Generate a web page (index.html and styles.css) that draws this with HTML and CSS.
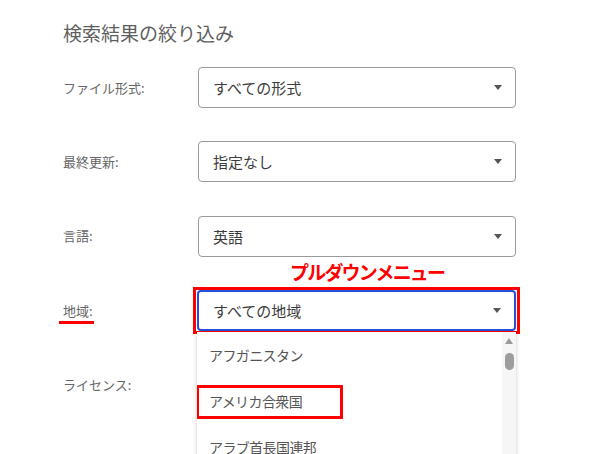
FILE: index.html
```html
<!DOCTYPE html>
<html lang="ja">
<head>
    <meta charset="UTF-8">
    <meta name="viewport" content="width=device-width, initial-scale=1.0">
    <title>検索結果の絞り込み</title>
    <link rel="stylesheet" href="styles.css">
</head>
<body>
    <div class="panel">
        <h2 class="title">検索結果の絞り込み</h2>
        <div class="filters">
            <div class="row">
                <span class="label">ファイル形式:</span>
                <div class="select"><span>すべての形式</span><i class="caret"></i></div>
            </div>
            <div class="row">
                <span class="label">最終更新:</span>
                <div class="select"><span>指定なし</span><i class="caret"></i></div>
            </div>
            <div class="row">
                <span class="label">言語:</span>
                <div class="select"><span>英語</span><i class="caret"></i></div>
            </div>
            <div class="row">
                <span class="label"><span class="marked">地域:</span></span>
                <div class="select-wrap">
                    <p class="note">プルダウンメニュー</p>
                    <div class="select focused"><span>すべての地域</span><i class="caret"></i></div>
                    <!-- open list of the region select -->
                    <div class="dropdown">
                        <ul class="options">
                            <li>アフガニスタン</li>
                            <li>アメリカ合衆国</li>
                            <li>アラブ首長国連邦</li>
                        </ul>
                        <div class="pick"></div>
                        <div class="scrollbar">
                            <i class="up"></i>
                            <i class="thumb"></i>
                        </div>
                    </div>
                </div>
            </div>
            <div class="row">
                <span class="label">ライセンス:</span>
            </div>
        </div>
    </div>
</body>
</html>
```

FILE: styles.css
```css
/* Filter panel */
html {
    height: 100%;
    overflow: hidden;
}
body {
    margin: 0;
    height: 100%;
    font-family: "Noto Sans CJK JP", "Noto Sans", sans-serif;
    background-color: #fff;
    color: #5f5f5f;
}
.panel {
    height: 100%;
    box-sizing: border-box;
    padding: 19px 0 0 63px;
}
.title {
    margin: 0 0 20px;
    font-size: 19px;
    line-height: 28px;
    font-weight: 400;
    color: #5f5f5f;
}
.filters {
    display: grid;
    row-gap: 33.4px;
}
.row {
    display: grid;
    grid-template-columns: 135px 318px;
    align-items: center;
    height: 41px;
}
.label {
    font-size: 13px;
    line-height: 18px;
    color: #666;
}
.marked {
    position: relative;
    display: inline-block;
}
.marked::after {
    content: "";
    position: absolute;
    left: -4px;
    width: 35px;
    top: calc(100% + 1px);
    height: 3px;
    background-color: #f00;
}
.select {
    display: flex;
    align-items: center;
    justify-content: space-between;
    box-sizing: border-box;
    height: 41px;
    padding: 0 13px 0 14px;
    border: 1px solid #9a9a9a;
    border-radius: 4px;
    background-color: #fff;
    font-size: 15px;
    color: #3c3c3c;
}
.caret {
    width: 0;
    height: 0;
    border-left: 4.5px solid transparent;
    border-right: 4.5px solid transparent;
    border-top: 5px solid #555;
}
.select-wrap {
    position: relative;
}
.select.focused {
    position: relative;
    margin-left: -1px;
    border: 2px solid #2750d6;
    padding-left: 14px;
}
/* red marker box round the open select */
.select.focused::after {
    content: "";
    position: absolute;
    top: -5px;
    bottom: -5px;
    left: -6px;
    right: -6px;
    border: 3px solid #f00;
}
.note {
    position: absolute;
    left: 92px;
    top: -31px;
    margin: 0;
    font-size: 19px;
    line-height: 26px;
    font-weight: 700;
    letter-spacing: -1.8px;
    color: #f00;
    white-space: nowrap;
}
.dropdown {
    position: absolute;
    left: -1px;
    top: 42px;
    width: 319px;
    height: 124px;
    overflow: hidden;
    background-color: #fff;
    box-shadow: 0 1px 4px rgba(0, 0, 0, 0.22);
    z-index: 2;
}
.options {
    list-style: none;
    margin: 0;
    padding: 0;
}
.options li {
    height: 46px;
    line-height: 46px;
    padding-left: 12px;
    font-size: 14px;
    letter-spacing: -0.6px;
    color: #555;
}
.pick {
    position: absolute;
    left: -1px;
    top: 53px;
    width: 147px;
    height: 34px;
    box-sizing: border-box;
    border: 3px solid #f00;
}
.scrollbar {
    position: absolute;
    top: 0;
    right: 0;
    bottom: 0;
    width: 14px;
    background-color: #f6f6f6;
}
.scrollbar .up {
    position: absolute;
    top: 6px;
    left: 2.5px;
    width: 0;
    height: 0;
    border-left: 4.5px solid transparent;
    border-right: 4.5px solid transparent;
    border-bottom: 6px solid #9a9a9a;
}
.scrollbar .thumb {
    position: absolute;
    top: 21px;
    left: 2.5px;
    width: 9px;
    height: 17px;
    border-radius: 5px;
    background-color: #9d9d9d;
}
```
